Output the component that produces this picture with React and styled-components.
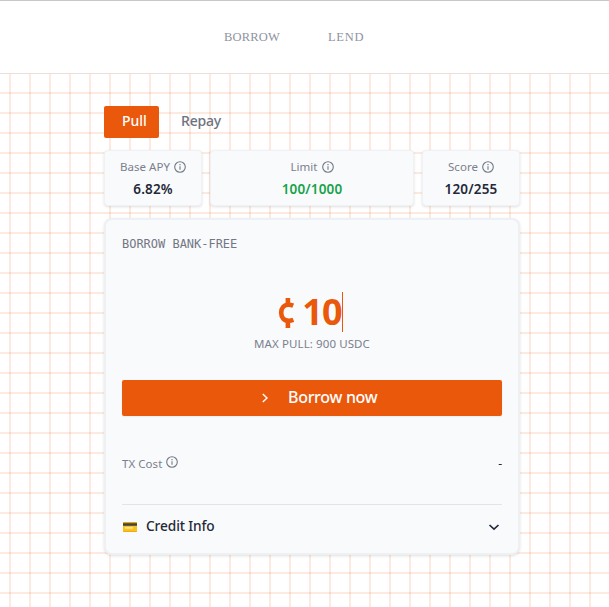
import React from "react";
import styled, { createGlobalStyle } from "styled-components";

const Global = createGlobalStyle`
  *, *::before, *::after { box-sizing: border-box; }
  body { margin: 0; background: #fff; overflow: hidden; font-family: "Noto Sans", sans-serif; }
  button { font: inherit; border: 0; margin: 0; padding: 0; background: none; }
`;

const Page = styled.div`
  height: 607px;
  background-image:
    linear-gradient(to right, rgba(234, 88, 12, 0.13) 2px, transparent 2px),
    linear-gradient(to bottom, rgba(234, 88, 12, 0.13) 2px, transparent 2px);
  background-size: 20px 20px;
  background-position: 9px 12px;
`;

const Header = styled.header`
  height: 74px;
  display: flex;
  gap: 48px;
  padding: 0 0 0 224px;
  align-items: center;
  background: #fff;
  border-top: 1px solid #c8c8c8;
  border-bottom: 1px solid #ecdfdb;
`;

const NavLink = styled.a`
  width: ${(p) => p.$w}px;
  white-space: nowrap;
  font-family: "Liberation Serif", serif;
  font-size: 12.5px;
  letter-spacing: ${(p) => p.$ls}px;
  color: #8f93a0;
`;

const Main = styled.main`
  width: 416px;
  margin: 32px 0 0 104px;
`;

const Tabs = styled.div`
  display: flex;
  height: 32px;
`;

const Tab = styled.button`
  width: ${(p) => p.$w}px;
  padding: 0 0 2px ${(p) => p.$pl}px;
  text-align: left;
  border-radius: 2px;
  font-size: 14px;
  line-height: 30px;
  font-weight: 500;
  letter-spacing: ${(p) => p.$ls}px;
  background: ${(p) => (p.$active ? "#ea580c" : "transparent")};
  color: ${(p) => (p.$active ? "#fff" : "#6b7280")};
`;

const Stats = styled.div`
  display: grid;
  grid-template-columns: 98px 204px 98px;
  gap: 8px;
  margin-top: 12px;
`;

const StatCard = styled.div`
  height: 56px;
  padding-top: 8px;
  display: flex;
  flex-direction: column;
  align-items: center;
  background: #f9fafc;
  border: 1px solid #f0f1f5;
  border-radius: 4px;
  box-shadow: 0 1px 3px rgba(0, 0, 0, 0.12);
`;

const Label = styled.div`
  display: flex;
  align-items: center;
  gap: 4px;
  height: 16px;
  font-size: 11.5px;
  line-height: 16px;
  letter-spacing: 0.05px;
  color: #7b808c;
  white-space: nowrap;
`;

const Value = styled.div`
  margin-top: 4px;
  font-size: 13.5px;
  line-height: 20px;
  font-weight: 600;
  letter-spacing: 0.15px;
  color: ${(p) => (p.$good ? "#16a34a" : "#1f2937")};
`;

const Panel = styled.section`
  height: 337px;
  margin-top: 12px;
  padding: 16px 16px 0;
  background: #f9fafc;
  border: 2px solid #eff0f4;
  border-radius: 8px;
  box-shadow: 0 1px 3px rgba(0, 0, 0, 0.12);
`;

const Title = styled.h2`
  margin: 0;
  font-family: "DejaVu Sans Mono", monospace;
  font-size: 12px;
  line-height: 16px;
  font-weight: 400;
  letter-spacing: -0.02px;
  color: #737784;
`;

const Amount = styled.div`
  display: flex;
  justify-content: center;
  align-items: center;
  height: 40px;
  margin-top: 40px;
  padding-right: 3px;
  font-size: 36px;
  font-weight: 700;
  color: #ea580c;
`;

const Cent = styled.svg`
  width: 16px;
  height: 32px;
  margin-right: 8px;
`;

const Digits = styled.span`
  line-height: 40px;
  letter-spacing: -0.8px;
`;

const Caret = styled.span`
  width: 1px;
  height: 40px;
  background: #ea580c;
`;

const MaxPull = styled.div`
  margin-top: 4px;
  text-align: center;
  font-size: 11.5px;
  line-height: 16px;
  letter-spacing: 0.1px;
  color: #7b808c;
`;

const Submit = styled.button`
  display: flex;
  align-items: center;
  width: 380px;
  height: 36px;
  margin-top: 28px;
  padding-left: 135px;
  gap: 15px;
  border-radius: 2px;
  background: #ea580c;
  color: #fff;
  font-size: 16px;
  font-weight: 500;
  letter-spacing: -0.3px;
  box-shadow: 0 1px 2px rgba(0, 0, 0, 0.06);
`;

const SubmitText = styled.span`
  line-height: 24px;
  padding-bottom: 2px;
`;

const Cost = styled.div`
  display: flex;
  justify-content: space-between;
  height: 89px;
  padding-top: 40px;
  border-bottom: 1px solid #e2e4e9;
  font-size: 12px;
  line-height: 16px;
  color: #1f2937;
`;

const CostInfo = styled.span`
  margin-top: -4px;
`;

const Credit = styled.div`
  display: flex;
  align-items: center;
  height: 43px;
  padding-right: 2px;
  font-size: 14px;
  color: #1f2937;
`;

const CreditTitle = styled.span`
  flex: 1;
  margin-left: 8px;
  padding-bottom: 2px;
  letter-spacing: -0.1px;
  font-weight: 500;
  font-size: 13.7px;
`;

const Icon = styled.svg`
  display: block;
  flex: none;
`;

const Info = () => (
  <Icon width="12" height="12" viewBox="0 0 12 12" fill="none" stroke="#737885" strokeWidth="1.1">
    <circle cx="6" cy="6" r="5.3" />
    <path d="M6 5.2v3.6M6 3v1.2" />
  </Icon>
);

const Card = () => (
  <Icon width="16" height="16" viewBox="0 0 16 16">
    <rect x="1" y="3" width="14" height="10" rx="1" fill="#fcc21b" />
    <path d="M1 4q0-1 1-1h12q1 0 1 1z" fill="#e2a610" />
    <path d="M1 4.2h14v2.6H1z" fill="#424242" />
    <path d="M3 8.3h8v1.2H3z" fill="#fff3cf" />
    <path d="M1 12h14q0 1-1 1H2q-1 0-1-1z" fill="#e9ae13" />
  </Icon>
);

export default function App() {
  return (
    <>
      <Global />
      <Page>
        <Header>
          <NavLink $w={56} $ls={0.2}>BORROW</NavLink>
          <NavLink $w={37} $ls={0.7}>LEND</NavLink>
        </Header>
        <Main>
          <Tabs>
            <Tab $active $w={55} $pl={18} $ls={0}>Pull</Tab>
            <Tab $w={64} $pl={22} $ls={-0.2}>Repay</Tab>
          </Tabs>
          <Stats>
            <StatCard>
              <Label>Base APY <Info /></Label>
              <Value>6.82%</Value>
            </StatCard>
            <StatCard>
              <Label>Limit <Info /></Label>
              <Value $good>100/1000</Value>
            </StatCard>
            <StatCard>
              <Label>Score <Info /></Label>
              <Value>120/255</Value>
            </StatCard>
          </Stats>
          <Panel>
            <Title>BORROW BANK-FREE</Title>
            <Amount>
              <Cent viewBox="0 0 16 32" fill="none" stroke="#ea580c" strokeWidth="4.6">
                <path d="M15.2 9.7Q13 8.8 10.6 8.8C5.8 8.8 3.2 12 3.2 16.8S6 24.7 10.8 24.7Q13.2 24.7 15.4 23.8" />
                <path d="M9.9 2v7M9.9 25v7" />
              </Cent>
              <Digits>10</Digits>
              <Caret />
            </Amount>
            <MaxPull>MAX PULL: 900 USDC</MaxPull>
            <Submit>
              <Icon width="16" height="16" viewBox="0 0 16 16" fill="none" stroke="#fff" strokeWidth="1.4">
                <path d="m5.8 4 4.2 4-4.2 4" />
              </Icon>
              <SubmitText>Borrow now</SubmitText>
            </Submit>
            <Cost>
              <Label>TX Cost <CostInfo><Info /></CostInfo></Label>
              <span>-</span>
            </Cost>
            <Credit>
              <Card />
              <CreditTitle>Credit Info</CreditTitle>
              <Icon width="12" height="12" viewBox="0 0 12 12" fill="none" stroke="#1f2937" strokeWidth="1.6">
                <path d="m1.5 4 4.5 4.2L10.5 4" />
              </Icon>
            </Credit>
          </Panel>
        </Main>
      </Page>
    </>
  );
}
